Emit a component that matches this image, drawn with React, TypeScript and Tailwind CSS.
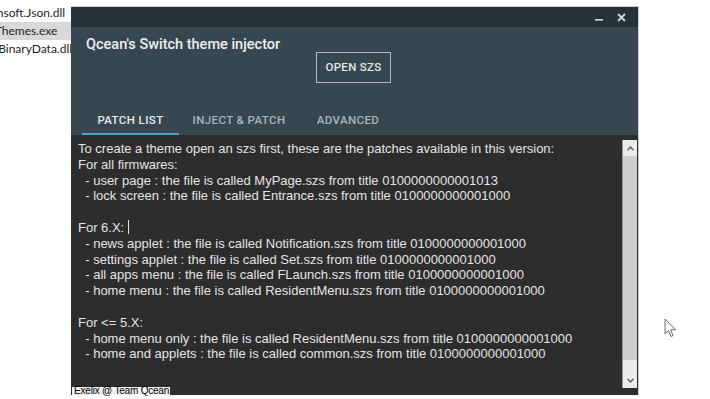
const lines: string[] = [
  'To create a theme open an szs first, these are the patches available in this version:',
  'For all firmwares:',
  '  - user page : the file is called MyPage.szs from title 0100000000001013',
  '  - lock screen : the file is called Entrance.szs from title 0100000000001000',
  '',
  'For 6.X: ',
  '  - news applet : the file is called Notification.szs from title 0100000000001000',
  '  - settings applet : the file is called Set.szs from title 0100000000001000',
  '  - all apps menu : the file is called FLaunch.szs from title 0100000000001000',
  '  - home menu : the file is called ResidentMenu.szs from title 0100000000001000',
  '',
  'For <= 5.X:',
  '  - home menu only : the file is called ResidentMenu.szs from title 0100000000001000',
  '  - home and applets : the file is called common.szs from title 0100000000001000',
];

const files = [
  { name: 'Newtonsoft.Json.dll', selected: false },
  { name: 'SwitchThemes.exe', selected: true },
  { name: 'Syroot.BinaryData.dll', selected: false },
];

function Chevron({ up }: { up?: boolean }) {
  return (
    <svg width="7" height="5" viewBox="0 0 7 5">
      <path
        d={up ? 'M0.5 4.2 L3.5 1 L6.5 4.2' : 'M0.5 0.8 L3.5 4 L6.5 0.8'}
        fill="none"
        stroke="#606060"
        strokeWidth="1.4"
      />
    </svg>
  );
}

export default function App() {
  return (
    <div className="relative w-[710px] h-[399px] overflow-hidden bg-white">
      {/* explorer list behind the window */}
      <div className="flex flex-col pt-[4px] text-[12px] text-[#1e1e1e] [font-family:Lato,sans-serif]">
        {files.map((f) => (
          <div
            key={f.name}
            className={`h-[18px] w-[80px] leading-[18px] whitespace-nowrap ${f.selected ? 'bg-[#d9d9d9]' : ''}`}
          >
            <span className="ml-[-39px]">{f.name}</span>
          </div>
        ))}
      </div>

      {/* cursor */}
      <svg className="absolute left-[664px] top-[318px]" width="13" height="20" viewBox="0 0 13 20">
        <path
          d="M1 1 L1 16 L4.5 12.5 L7 18.5 L9 17.6 L6.6 11.8 L11.5 11.8 Z"
          fill="#ffffff"
          stroke="#6b6b6b"
          strokeWidth="1"
          strokeLinejoin="round"
        />
      </svg>

      {/* app window */}
      <div className="absolute left-[71px] top-[6px] w-[568px] h-[389px] flex flex-col border-t border-r border-[#cfcfcf] [font-family:Roboto,sans-serif]">
        <div className="h-[20px] bg-[#263238] flex items-center justify-end gap-[14px] pr-[12px]">
          <svg width="8" height="10" viewBox="0 0 8 10">
            <rect x="0" y="7" width="8" height="1.6" fill="#cfd8dc" />
          </svg>
          <svg width="9" height="9" viewBox="0 0 9 9">
            <path d="M1 1 L8 8 M8 1 L1 8" stroke="#cfd8dc" strokeWidth="1.8" />
          </svg>
        </div>

        <div className="h-[108px] bg-[#37474f] flex flex-col">
          <div className="flex pl-[15px] pt-[8px]">
            <div className="w-[230px] text-[14.5px] leading-[20px] font-medium text-[#eceff1]">
              Qcean's Switch theme injector
            </div>
            <div className="mt-[17px] w-[75px] h-[31px] border border-[#b0b8bc] flex items-center justify-center text-[11.5px] font-medium text-[#e3e7e9] tracking-[0.3px]">
              OPEN SZS
            </div>
          </div>
          <div className="mt-auto flex pl-[11px] text-[11.5px] font-medium tracking-[0.4px]">
            <div className="w-[97px] h-[28px] flex flex-col">
              <div className="flex-1 flex items-center justify-center pt-[2px] text-[#e6eaec]">PATCH LIST</div>
              <div className="h-[2px] bg-[#4ba3cb]" />
            </div>
            <div className="w-[120px] h-[28px] flex items-center justify-center pt-[2px] pb-[2px] text-[#a9b6bc]">
              INJECT &amp; PATCH
            </div>
            <div className="w-[98px] h-[28px] flex items-center justify-center pt-[2px] pb-[2px] text-[#a9b6bc]">
              ADVANCED
            </div>
          </div>
        </div>

        <div className="relative flex-1 bg-[#2d2d2d] pt-[5px]">
          <div className="flex h-[248px]">
            <div className="flex-1 pl-[7px] pt-[1px] text-[13px] leading-[15.8px] text-[#e4e4e4] whitespace-pre [font-family:'Liberation_Sans',sans-serif]">
              {lines.map((l, i) => (
                <div key={i} className="h-[15.8px]">
                  {l}
                  {i === 5 && <span className="inline-block w-[1px] h-[14px] bg-[#e4e4e4] align-[-2px]" />}
                </div>
              ))}
            </div>
            <div className="w-[15px] mr-[1px] flex flex-col bg-[#ebebeb] border-l border-[#9a9a9a]">
              <div className="h-[16px] flex items-center justify-center">
                <Chevron up />
              </div>
              <div className="h-[204px] bg-[#cdcdcd]" />
              <div className="flex-1 flex items-end justify-center pb-[5px]">
                <Chevron />
              </div>
            </div>
          </div>
          <div className="absolute left-[1px] bottom-0 h-[8px] w-[98px] bg-[#f0f0f0]">
            <div className="pl-[2px] text-[10px] leading-[8px] text-black tracking-[-0.2px] whitespace-nowrap [font-family:'Liberation_Sans',sans-serif]">
              Exelix @ Team Qcean
            </div>
          </div>
        </div>
      </div>
    </div>
  );
}
